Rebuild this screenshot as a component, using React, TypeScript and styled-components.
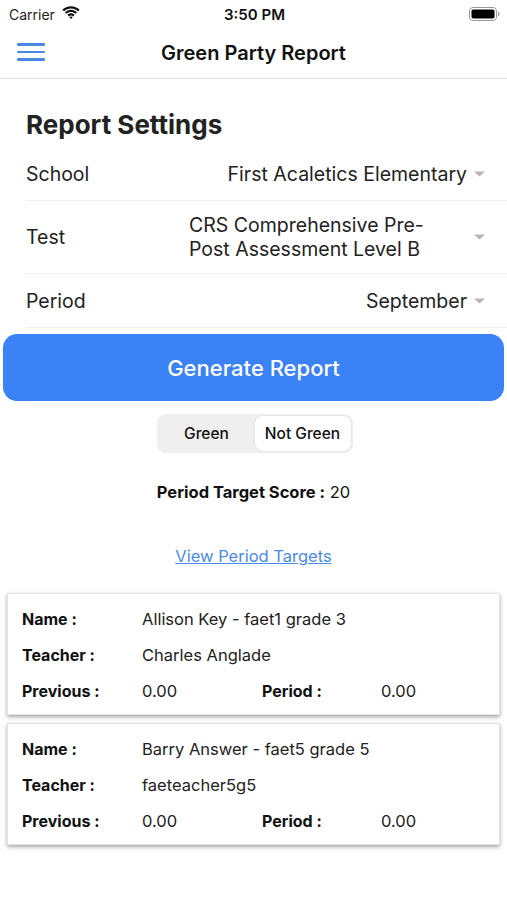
import React from "react"
import styled, { createGlobalStyle } from "styled-components"

const GlobalStyle = createGlobalStyle`
  body {
    margin: 0;
    background: #fff;
    font-family: Inter, "Liberation Sans", Arial, sans-serif;
    color: #111;
  }
`

type TStudent = {
  name: string
  teacher: string
  previous: string
  period: string
}

const students: TStudent[] = [
  { name: "Allison Key - faet1 grade 3", teacher: "Charles Anglade", previous: "0.00", period: "0.00" },
  { name: "Barry Answer - faet5 grade 5", teacher: "faeteacher5g5", previous: "0.00", period: "0.00" },
]

const settings = [
  { label: "School", value: "First Acaletics Elementary", tall: false },
  { label: "Test", value: "CRS Comprehensive Pre-\nPost Assessment Level B", tall: true },
  { label: "Period", value: "September", tall: false },
]

const Wifi = () => (
  <svg width="20" height="15" viewBox="0 0 19 14">
    <path d="M9.5 3.2c2.6 0 5 1 6.8 2.7l1.4-1.5C15.6 2.3 12.7 1 9.5 1S3.4 2.3 1.3 4.4l1.4 1.5C4.5 4.2 6.9 3.2 9.5 3.2z" fill="#111" />
    <path d="M9.5 6.6c1.6 0 3.1.6 4.3 1.7l1.4-1.5C13.7 5.4 11.7 4.5 9.5 4.5S5.3 5.4 3.8 6.8l1.4 1.5c1.2-1.1 2.7-1.7 4.3-1.7z" fill="#111" />
    <path d="M9.5 9.9c.8 0 1.5.3 2 .8l1.4-1.5c-.9-.9-2.1-1.4-3.4-1.4s-2.5.5-3.4 1.4l1.4 1.5c.5-.5 1.2-.8 2-.8z" fill="#111" />
    <path d="M9.5 13.2l1.6-1.7c-.4-.4-1-.6-1.6-.6s-1.2.2-1.6.6z" fill="#111" />
  </svg>
)

const Battery = () => (
  <svg width="31" height="14" viewBox="0 0 31 14">
    <rect x="0.5" y="0.5" width="27" height="13" rx="3.5" fill="none" stroke="#999" />
    <rect x="2.5" y="2.5" width="23" height="9" rx="1.8" fill="#000" />
    <path d="M29 4.5c1 .3 1.5 1.3 1.5 2.5s-.5 2.2-1.5 2.5z" fill="#999" />
  </svg>
)

const Caret = () => (
  <svg width="11" height="6" viewBox="0 0 11 6">
    <path d="M0 0.5h11L5.5 5.5z" fill="#b5b5b5" />
  </svg>
)

const App = () => {
  return (
    <Page>
      <GlobalStyle />
      <StatusBar>
        <Carrier>Carrier <Wifi /></Carrier>
        <Clock>3:50 PM</Clock>
        <BatteryWrap><Battery /></BatteryWrap>
      </StatusBar>
      <NavBar>
        <Hamburger>
          <span /><span /><span />
        </Hamburger>
        <NavTitle>Green Party Report</NavTitle>
      </NavBar>

      <Settings>
        <Heading>Report Settings</Heading>
        {settings.map(s => (
          <SettingRow key={s.label} tall={s.tall}>
            <SettingLabel>{s.label}</SettingLabel>
            <SettingValue tall={s.tall}>{s.value}</SettingValue>
            <CaretWrap><Caret /></CaretWrap>
          </SettingRow>
        ))}
      </Settings>

      <GenerateButton>Generate Report</GenerateButton>

      <Segment>
        <SegmentItem active={false}>Green</SegmentItem>
        <SegmentItem active={true}>Not Green</SegmentItem>
      </Segment>

      <TargetScore><b>Period Target Score :</b> 20</TargetScore>

      <TargetLink href="#">View Period Targets</TargetLink>

      <CardList>
        {students.map(s => (
          <Card key={s.name}>
            <CardRow>
              <CardLabel>Name :</CardLabel>
              <CardValue wide>{s.name}</CardValue>
            </CardRow>
            <CardRow>
              <CardLabel>Teacher :</CardLabel>
              <CardValue wide>{s.teacher}</CardValue>
            </CardRow>
            <CardRow>
              <CardLabel>Previous :</CardLabel>
              <CardValue>{s.previous}</CardValue>
              <CardLabel>Period :</CardLabel>
              <CardValue>{s.period}</CardValue>
            </CardRow>
          </Card>
        ))}
      </CardList>
    </Page>
  )
}

const Page = styled.div`
  width: 507px;
  min-height: 900px;
  display: flex;
  flex-direction: column;
`

const StatusBar = styled.div`
  height: 28px;
  display: grid;
  grid-template-columns: 1fr auto 1fr;
  align-items: center;
  padding: 0 7px 0 9px;
`

const Carrier = styled.div`
  display: flex;
  align-items: center;
  gap: 6px;
  font-size: 14px;
  color: #222;
  svg { margin-top: -3px; }
`

const Clock = styled.div`
  font-size: 15px;
  font-weight: 600;
`

const BatteryWrap = styled.div`
  justify-self: end;
  display: flex;
`

const NavBar = styled.div`
  height: 50px;
  display: flex;
  align-items: center;
  justify-content: center;
  border-bottom: 1px solid #e2e2e2;
  position: relative;
`

const Hamburger = styled.div`
  position: absolute;
  left: 17px;
  top: 15px;
  width: 28px;
  display: flex;
  flex-direction: column;
  gap: 5px;
  span {
    display: block;
    height: 2.5px;
    border-radius: 1px;
    background: #4a86e8;
  }
`

const NavTitle = styled.div`
  font-size: 20px;
  font-weight: 600;
  color: #111;
`

const Settings = styled.div`
  padding: 30px 0 0 26px;
`

const Heading = styled.h1`
  margin: 0 0 6px;
  font-size: 26px;
  line-height: 32px;
  font-weight: 700;
  color: #222;
`

const SettingRow = styled.div<{ tall: boolean }>`
  height: ${p => (p.tall ? 72 : 53)}px;
  display: flex;
  align-items: center;
  border-bottom: 1px solid #efefef;
  padding-right: 22px;
`

const SettingLabel = styled.div`
  flex: 1;
  font-size: 19.5px;
  color: #222;
`

const SettingValue = styled.div<{ tall: boolean }>`
  width: ${p => (p.tall ? "278px" : "auto")};
  font-size: 19.5px;
  line-height: 24px;
  color: #222;
  white-space: pre-line;
  margin-right: 3px;
`

const CaretWrap = styled.div`
  display: flex;
  margin-left: 4px;
`

const GenerateButton = styled.button`
  margin: 6px 3px 0;
  height: 67px;
  border: none;
  border-radius: 14px;
  background: #3b82f6;
  color: #fff;
  font-family: inherit;
  font-size: 22px;
  font-weight: 500;
`

const Segment = styled.div`
  align-self: center;
  margin-top: 13px;
  margin-left: 2px;
  width: 196px;
  height: 39px;
  box-sizing: border-box;
  padding: 2px;
  border-radius: 9px;
  background: #efefef;
  display: grid;
  grid-template-columns: 1fr 1fr;
`

const SegmentItem = styled.div<{ active: boolean }>`
  display: flex;
  align-items: center;
  justify-content: center;
  border-radius: 8px;
  font-size: 15.5px;
  font-weight: 500;
  color: #111;
  background: ${p => (p.active ? "#fff" : "transparent")};
  box-shadow: ${p => (p.active ? "0 0 2px rgba(0,0,0,0.12)" : "none")};
`

const TargetScore = styled.div`
  margin-top: 30px;
  text-align: center;
  font-size: 16.5px;
  line-height: 18px;
  color: #111;
  b { font-weight: 700; }
`

const TargetLink = styled.a`
  align-self: center;
  margin-top: 45px;
  font-size: 16.5px;
  line-height: 20px;
  color: #4a8ae8;
  text-decoration: underline;
`

const CardList = styled.div`
  margin-top: 27px;
  display: flex;
  flex-direction: column;
  gap: 8px;
  padding: 0 7px;
`

const Card = styled.div`
  height: 122px;
  box-sizing: border-box;
  padding: 7px 14px 0;
  background: #fff;
  border: 1px solid #e4e4e4;
  box-shadow: 0 2px 4px rgba(0, 0, 0, 0.35);
`

const CardRow = styled.div`
  height: 36px;
  display: grid;
  grid-template-columns: 120px 120px 119px 1fr;
  align-items: center;
`

const CardLabel = styled.div`
  font-size: 16px;
  font-weight: 700;
  color: #111;
`

const CardValue = styled.div<{ wide?: boolean }>`
  font-size: 16.5px;
  color: #222;
  grid-column: ${p => (p.wide ? "2 / 5" : "auto")};
`

export default App
